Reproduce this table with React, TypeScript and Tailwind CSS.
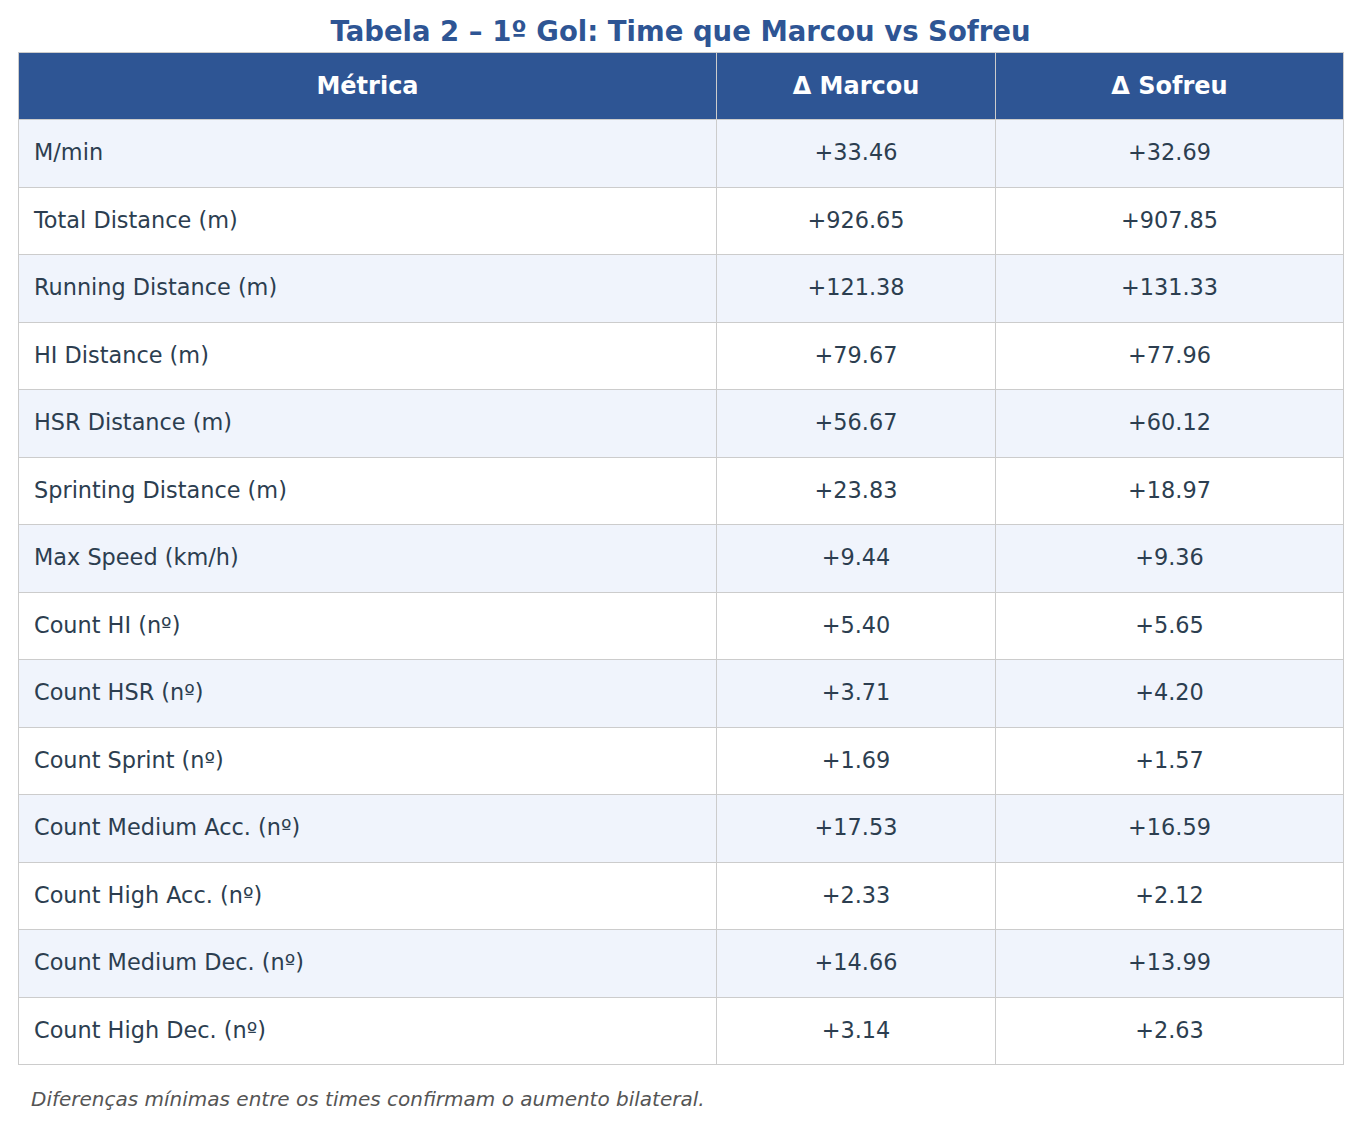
const rows: [string, string, string][] = [
  ['M/min', '+33.46', '+32.69'],
  ['Total Distance (m)', '+926.65', '+907.85'],
  ['Running Distance (m)', '+121.38', '+131.33'],
  ['HI Distance (m)', '+79.67', '+77.96'],
  ['HSR Distance (m)', '+56.67', '+60.12'],
  ['Sprinting Distance (m)', '+23.83', '+18.97'],
  ['Max Speed (km/h)', '+9.44', '+9.36'],
  ['Count HI (nº)', '+5.40', '+5.65'],
  ['Count HSR (nº)', '+3.71', '+4.20'],
  ['Count Sprint (nº)', '+1.69', '+1.57'],
  ['Count Medium Acc. (nº)', '+17.53', '+16.59'],
  ['Count High Acc. (nº)', '+2.33', '+2.12'],
  ['Count Medium Dec. (nº)', '+14.66', '+13.99'],
  ['Count High Dec. (nº)', '+3.14', '+2.63'],
]

export default function App() {
  return (
    <div className="min-h-screen bg-white px-[18px] pt-[14px] font-['DejaVu_Sans',sans-serif] text-[#2c3e50]">
      <h1 className="text-center text-[27.5px] font-bold leading-[34px] text-[#2e5594]">
        Tabela 2 – 1º Gol: Time que Marcou vs Sofreu
      </h1>

      <table className="mt-[4px] w-full table-fixed border-collapse">
        <colgroup>
          <col className="w-[698px]" />
          <col className="w-[279px]" />
          <col className="w-[348px]" />
        </colgroup>
        <thead>
          <tr className="h-[67px] bg-[#2e5594] text-[24px] font-bold text-white">
            <th className="border border-[#cccccc] text-center">Métrica</th>
            <th className="border border-[#cccccc] text-center">Δ Marcou</th>
            <th className="border border-[#cccccc] text-center">Δ Sofreu</th>
          </tr>
        </thead>
        <tbody>
          {rows.map(([name, marcou, sofreu], i) => (
            <tr key={name} className={`h-[67.5px] text-[22.4px] ${i % 2 === 0 ? 'bg-[#f0f4fc]' : 'bg-white'}`}>
              <td className="border border-[#cccccc] pl-[15px] text-left">{name}</td>
              <td className="border border-[#cccccc] text-center">{marcou}</td>
              <td className="border border-[#cccccc] text-center">{sofreu}</td>
            </tr>
          ))}
        </tbody>
      </table>

      <p className="mt-[20px] pl-[13px] text-[20px] italic leading-[28px] text-[#555555]">
        Diferenças mínimas entre os times confirmam o aumento bilateral.
      </p>
    </div>
  )
}
